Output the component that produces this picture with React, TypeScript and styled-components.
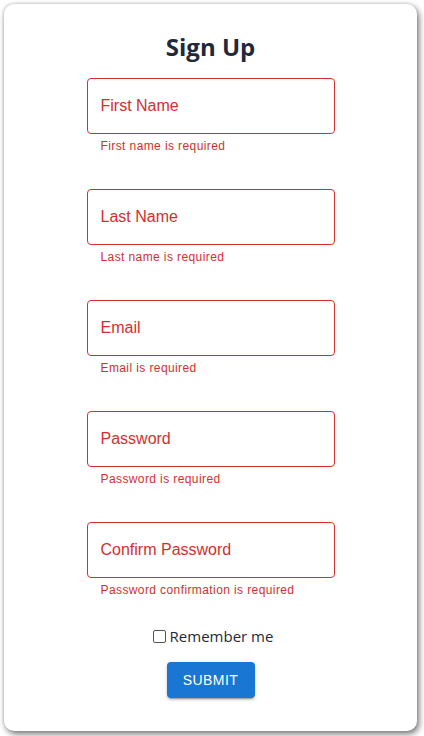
import React from "react";
import styled, { createGlobalStyle } from "styled-components";

const Global = createGlobalStyle`
  html, body { margin: 0; padding: 0; background: #ffffff; }
  body { padding: 4px 7px 5px 4px; box-sizing: border-box; }
  * { box-sizing: border-box; }
`;

const Card = styled.form`
  width: 413px;
  height: 727px;
  background: #ffffff;
  border-radius: 10px;
  box-shadow: 2px 3px 6px rgba(0, 0, 0, 0.55), -1px -1px 3px rgba(0, 0, 0, 0.12);
  display: flex;
  flex-direction: column;
  align-items: center;
  padding-top: 26px;
`;

const Title = styled.h1`
  margin: 0 0 14px;
  font-family: "Open Sans", "Noto Sans", sans-serif;
  font-weight: 700;
  font-size: 24px;
  line-height: 34px;
  color: #1e2a3b;
`;

const Field = styled.div`
  width: 248px;
  display: flex;
  flex-direction: column;
  margin-bottom: 33px;
`;

const Box = styled.div`
  height: 56px;
  border: 1px solid #d32f2f;
  border-radius: 4px;
  display: flex;
  align-items: center;
  padding: 0 13px;
  font-family: "Liberation Sans", Arial, sans-serif;
  font-size: 16px;
  color: #d32f2f;
`;

const Helper = styled.div`
  margin: 2px 14px 0;
  font-family: "Liberation Sans", Arial, sans-serif;
  font-size: 12px;
  line-height: 20px;
  letter-spacing: 0.4px;
  color: #d32f2f;
`;

const CheckRow = styled.label`
  display: flex;
  align-items: center;
  gap: 4px;
  margin-top: -7px;
  font-family: "Open Sans", "Noto Sans", sans-serif;
  font-size: 15px;
  color: #1e2a3b;
`;

const Check = styled.span`
  width: 13px;
  height: 13px;
  margin-left: 5px;
  border: 1px solid #555;
  border-radius: 2px;
  background: #fff;
`;

const Submit = styled.button`
  margin-top: 16px;
  width: 88px;
  height: 36px;
  border: none;
  border-radius: 4px;
  background: #1976d2;
  color: #fff;
  font-family: "Liberation Sans", Arial, sans-serif;
  font-size: 14px;
  font-weight: 500;
  letter-spacing: 0.4px;
  text-transform: uppercase;
  box-shadow: 0 3px 1px -2px rgba(0,0,0,0.2), 0 2px 2px 0 rgba(0,0,0,0.14), 0 1px 5px 0 rgba(0,0,0,0.12);
`;

const fields = [
  ["First Name", "First name is required"],
  ["Last Name", "Last name is required"],
  ["Email", "Email is required"],
  ["Password", "Password is required"],
  ["Confirm Password", "Password confirmation is required"],
];

export default function App() {
  return (
    <>
      <Global />
      <Card onSubmit={(e) => e.preventDefault()}>
        <Title>Sign Up</Title>
        {fields.map(([label, help]) => (
          <Field key={label}>
            <Box>{label}</Box>
            <Helper>{help}</Helper>
          </Field>
        ))}
        <CheckRow>
          <Check />
          Remember me
        </CheckRow>
        <Submit type="submit">Submit</Submit>
      </Card>
    </>
  );
}
